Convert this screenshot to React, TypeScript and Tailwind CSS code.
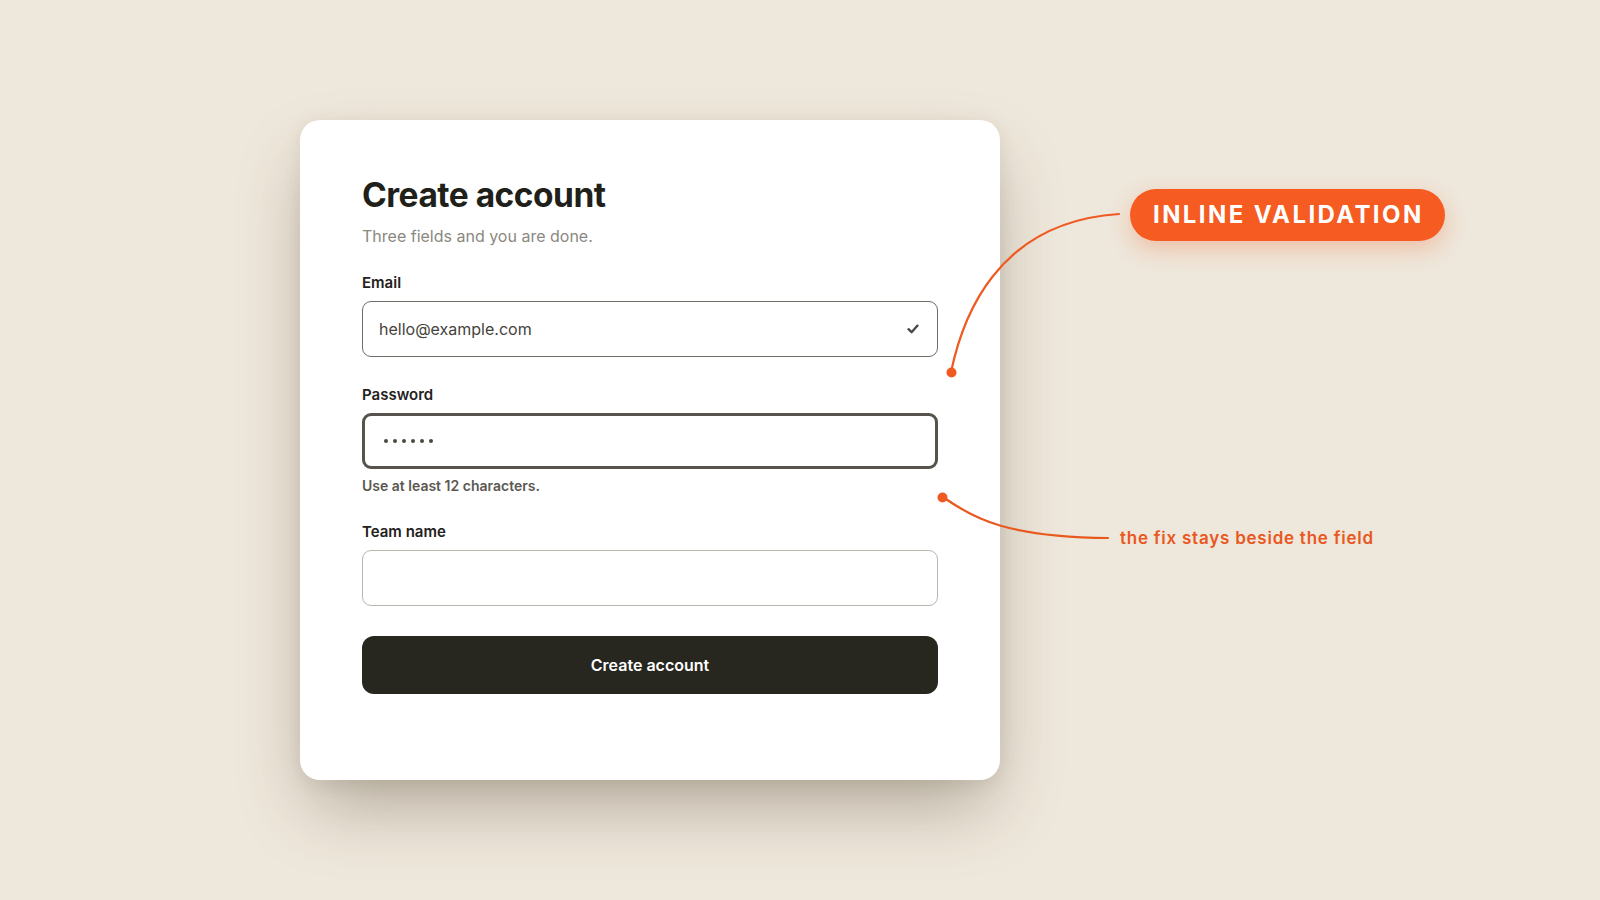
import React from "react";

const font = { fontFamily: "Inter, 'Noto Sans', Arial, sans-serif" };

function Field({
  label,
  children,
  className = "",
}: {
  label: string;
  children: React.ReactNode;
  className?: string;
}) {
  return (
    <div className={`flex flex-col ${className}`}>
      <label className="mb-[8px] text-[15px] leading-[20px] font-semibold text-[#23211c]">
        {label}
      </label>
      {children}
    </div>
  );
}

const App = () => {
  return (
    <div
      className="relative h-[900px] w-[1600px] overflow-hidden bg-[#eee7db] pl-[300px] pt-[120px]"
      style={font}
    >
      {/* Card */}
      <div className="flex h-[660px] w-[700px] flex-col rounded-[20px] bg-white px-[62px] pt-[55px] shadow-[0_34px_70px_-12px_rgba(70,58,36,0.38),0_4px_18px_rgba(70,58,36,0.08)]">
        <h1 className="text-[33.5px] leading-[40px] font-bold tracking-[-0.015em] text-[#211f1a]">
          Create account
        </h1>
        <p className="mt-[9px] text-[16px] leading-[24px] text-[#8b8880]">
          Three fields and you are done.
        </p>

        <Field label="Email" className="mt-[25px]">
          <div className="flex h-[56px] items-center justify-between rounded-[9px] border border-[#6f6c66] pl-[16px] pr-[18px]">
            <span className="text-[16px] text-[#45423c]">hello@example.com</span>
            <svg width="12" height="10" viewBox="0 0 12 10" fill="none">
              <path
                d="M1.5 5.2 L4.6 8.2 L10.5 1.6"
                stroke="#4a4741"
                strokeWidth="2.3"
                strokeLinecap="round"
                strokeLinejoin="round"
              />
            </svg>
          </div>
        </Field>

        <Field label="Password" className="mt-[28px]">
          <div className="flex h-[56px] items-center gap-[5px] rounded-[9px] border-[3px] border-[#56534c] pl-[19px]">
            {[0, 1, 2, 3, 4, 5].map((i) => (
              <span key={i} className="h-[4px] w-[4px] rounded-full bg-[#4a4741]" />
            ))}
          </div>
          <p className="mt-[7px] text-[14px] leading-[20px] font-semibold text-[#5b5852]">
            Use at least 12 characters.
          </p>
        </Field>

        <Field label="Team name" className="mt-[26px]">
          <div className="h-[56px] rounded-[9px] border border-[#b9b6ae]" />
        </Field>

        <button className="mt-[30px] flex h-[58px] items-center justify-center rounded-[12px] bg-[#27261f] text-[16px] font-semibold text-white">
          Create account
        </button>
      </div>

      {/* Annotation lines */}
      <svg
        className="pointer-events-none absolute left-0 top-0"
        width="1600"
        height="900"
        viewBox="0 0 1600 900"
        fill="none"
      >
        <path
          d="M951 372 C 962 320, 995 222, 1119 214"
          stroke="#ef5a22"
          strokeWidth="2.2"
          strokeLinecap="round"
        />
        <circle cx="951.5" cy="372.5" r="5" fill="#ef5a22" />
        <path
          d="M943 497 C 975 520, 1010 537, 1108 538"
          stroke="#e8581f"
          strokeWidth="2.2"
          strokeLinecap="round"
        />
        <circle cx="942.5" cy="497.5" r="5" fill="#ef5a22" />
      </svg>

      {/* Badge */}
      <div className="absolute left-[1130px] top-[189px] flex h-[52px] items-center rounded-full bg-[#f65b21] pl-[23px] pr-[21px] text-[24px] font-bold tracking-[0.1em] text-white shadow-[0_8px_22px_rgba(240,90,30,0.28)]">
        INLINE VALIDATION
      </div>

      {/* Caption */}
      <div className="absolute left-[1120px] top-[526px] text-[17px] leading-[24px] font-semibold tracking-[0.045em] text-[#e8581f]">
        the fix stays beside the field
      </div>
    </div>
  );
};

export default App;
